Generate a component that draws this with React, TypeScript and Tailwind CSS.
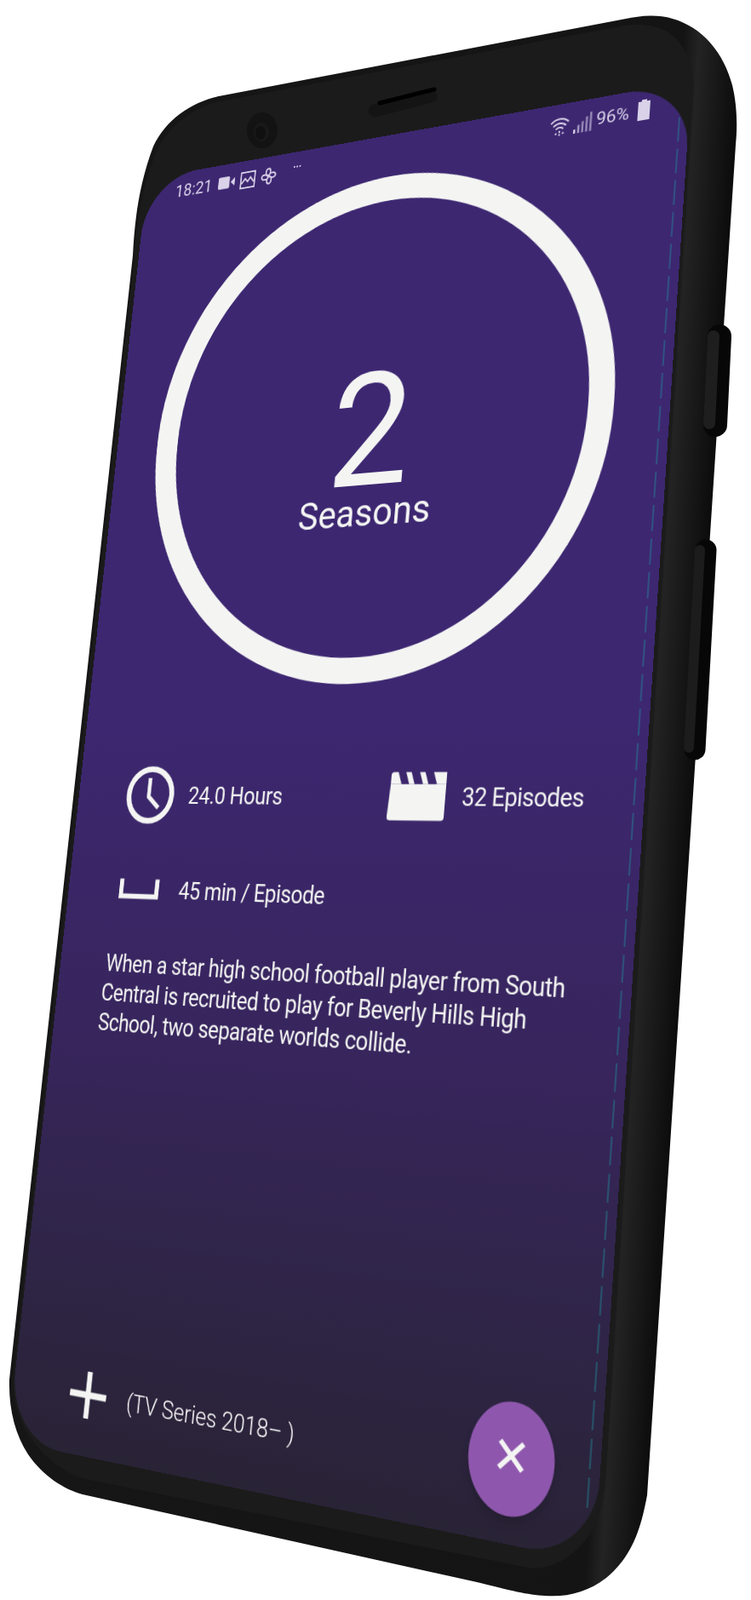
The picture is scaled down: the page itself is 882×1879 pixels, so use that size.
const W = 360;
const H = 760;

function quadMatrix(
  [x0, y0]: number[],
  [x1, y1]: number[],
  [x2, y2]: number[],
  [x3, y3]: number[],
) {
  const dx1 = x1 - x2;
  const dx2 = x3 - x2;
  const sx = x0 - x1 + x2 - x3;
  const dy1 = y1 - y2;
  const dy2 = y3 - y2;
  const sy = y0 - y1 + y2 - y3;
  const den = dx1 * dy2 - dx2 * dy1;
  const g = (sx * dy2 - dx2 * sy) / den;
  const h = (dx1 * sy - sx * dy1) / den;
  const a = x1 - x0 + g * x1;
  const b = x3 - x0 + h * x3;
  const d = y1 - y0 + g * y1;
  const e = y3 - y0 + h * y3;
  return `matrix3d(${[a / W, d / W, 0, g / W, b / H, e / H, 0, h / H, 0, 0, 1, 0, x0, y0, 0, 1].join(",")})`;
}

function PhoneBody() {
  return (
    <svg className="absolute inset-0" width="882" height="1879" viewBox="0 0 882 1879">
      <defs>
        <linearGradient id="side" gradientUnits="userSpaceOnUse" x1="85" y1="857" x2="822" y2="904">
          <stop offset="0" stopColor="#161616" />
          <stop offset="0.9" stopColor="#141414" />
          <stop offset="0.925" stopColor="#232323" />
          <stop offset="1" stopColor="#090909" />
        </linearGradient>
      </defs>
      <path
        d="M257 113L735 22C750 19 770 16 790 22C825 32 850 62 860 100C866 125 866 150 864 170L760 1756C752 1800 740 1830 712 1853C690 1870 665 1876 640 1874C620 1873 600 1868 560 1858L97 1755C75 1749 50 1733 33 1708C18 1685 10 1655 11 1620L156 300C158 260 163 217 180 172C195 140 225 120 257 113Z"
        fill="url(#side)"
      />
      <path
        d="M258 119L722 32C745 27 765 28 782 36C800 46 812 70 815 95L711 1740C708 1770 700 1795 685 1812C668 1830 650 1842 625 1842L100 1737C70 1728 45 1705 30 1680C20 1660 15 1640 15 1620L158 300C160 260 168 215 185 175C200 145 230 125 258 119Z"
        fill="#1b1b1b"
      />
      <line x1="845" y1="395" x2="840" y2="499" stroke="#070707" strokeWidth="28" strokeLinecap="round" />
      <line x1="838" y1="395" x2="833" y2="497" stroke="#1e1e1e" strokeWidth="14" strokeLinecap="round" />
      <line x1="829" y1="646" x2="816" y2="880" stroke="#070707" strokeWidth="25" strokeLinecap="round" />
      <line x1="822" y1="646" x2="809" y2="878" stroke="#1c1c1c" strokeWidth="12" strokeLinecap="round" />
      <line x1="440" y1="130" x2="506" y2="113" stroke="#141414" strokeWidth="15" strokeLinecap="round" />
      <line x1="446" y1="121" x2="510" y2="105" stroke="#000000" strokeWidth="5" strokeLinecap="round" />
      <ellipse cx="308" cy="153" rx="18" ry="21" fill="#131313" />
      <ellipse cx="307" cy="155" rx="9" ry="11" fill="#191919" />
      <ellipse cx="306" cy="156" rx="6" ry="8" fill="#101010" />
    </svg>
  );
}

function StatusLeft() {
  return (
    <div className="flex items-center gap-[4px] text-[#d9d2e9]">
      <span className="text-[11px] leading-none mr-[1px]">18:21</span>
      <svg width="12" height="8" viewBox="0 0 11 7" fill="currentColor">
        <rect width="7.5" height="7" rx="0.8" />
        <path d="M8.2 3.5L11 1v5z" />
      </svg>
      <svg width="11" height="11" viewBox="0 0 10 10" fill="none" stroke="currentColor" strokeWidth="0.9">
        <rect x="0.5" y="0.5" width="9" height="9" />
        <path d="M1 7L3.2 4.2L5 6L6.6 3.6L9 6.5" />
      </svg>
      <svg width="11" height="11" viewBox="0 0 10 10" fill="none" stroke="currentColor" strokeWidth="0.9">
        <path d="M5 5C2.6 4.8 2.6 .6 4.6 .6C6.4 .6 6.4 3.4 5 5ZM5 5C5.2 2.6 9.4 2.6 9.4 4.6C9.4 6.4 6.6 6.4 5 5ZM5 5C7.4 5.2 7.4 9.4 5.4 9.4C3.6 9.4 3.6 6.6 5 5ZM5 5C4.8 7.4 .6 7.4 .6 5.4C.6 3.6 3.4 3.6 5 5Z" />
      </svg>
      <span className="ml-[8px] mb-[5px] flex gap-[1px]">
        <span className="w-[1px] h-[1px] bg-current" />
        <span className="w-[1px] h-[1px] bg-current" />
        <span className="w-[1px] h-[1px] bg-current" />
      </span>
    </div>
  );
}

function StatusRight() {
  return (
    <div className="flex items-center gap-[2px] text-[#d9d2e9] translate-y-[1px]">
      <svg width="13" height="12" viewBox="0 0 10 10" fill="none" stroke="currentColor" strokeWidth="0.8">
        <path d="M0.5 3.4C3 0.8 7 0.8 9.5 3.4" />
        <path d="M1.8 5C3.6 3.2 6.4 3.2 8.2 5" />
        <path d="M3.1 6.5C4.2 5.5 5.8 5.5 6.9 6.5" />
        <path d="M3.2 8.2v1.6M5 7.4v2.4M6.8 8.2v1.6" strokeDasharray="1 0.6" />
      </svg>
      <svg width="12" height="12" viewBox="0 0 10 10" fill="currentColor">
        <rect x="0" y="8" width="1" height="2" />
        <rect x="2" y="6" width="1" height="4" opacity="0.7" />
        <rect x="4" y="4.5" width="1" height="5.5" opacity="0.6" />
        <rect x="6" y="2.5" width="1" height="7.5" opacity="0.6" />
        <rect x="8" y="0.5" width="1" height="9.5" opacity="0.6" />
      </svg>
      <span className="text-[10.5px] leading-none mr-[3px]">96%</span>
      <svg width="7" height="12" viewBox="0 0 7 12" fill="currentColor" className="-translate-y-[1px]">
        <path d="M2 0h3v1h2v11H0V1h2z" />
      </svg>
    </div>
  );
}

function ClockIcon() {
  return (
    <svg width="34" height="34" viewBox="0 0 34 34" fill="none" stroke="#f4f5f3">
      <circle cx="17" cy="17" r="15.2" strokeWidth="3.4" />
      <path d="M16 7V18L23.5 24.5" strokeWidth="2.6" />
    </svg>
  );
}

function ClapperIcon() {
  return (
    <svg width="35" height="28" viewBox="0 0 37 28" fill="#f4f5f3">
      <path d="M1 7V2a2 2 0 0 1 2-2h2.5l2.5 7zM10.5 0h3.5l2.5 7H13zM19.5 0H23l2.5 7H22zM28.5 0H37v7h-6z" />
      <path d="M1 7h36v19a2 2 0 0 1-2 2H2a2 2 0 0 1-2-2z" />
    </svg>
  );
}

function BracketIcon() {
  return (
    <svg width="28" height="12" viewBox="0 0 29 12" fill="#f4f5f3">
      <path d="M0 0h3v9h23V0h3v12H0z" />
    </svg>
  );
}

function Screen() {
  const transform = quadMatrix([173, 210], [812, 95], [698, 1835], [9, 1692]);
  return (
    <div
      className="absolute left-0 top-0 origin-top-left w-[360px] h-[760px] rounded-[38px] overflow-hidden flex flex-col bg-linear-to-b from-[#3d2771] from-45% via-[#37255c] via-70% to-[#292336] font-[family-name:Roboto,sans-serif] text-[#f4f5f3]"
      style={{ transform }}
    >
      <div className="h-6 shrink-0 px-[23px] flex items-center justify-between">
        <StatusLeft />
        <StatusRight />
      </div>

      <div className="ml-[30px] mt-[2px] w-[298px] h-[301px] shrink-0 rounded-full border-[15px] border-[#f4f5f3] flex flex-col items-center pt-[104px]">
        <span className="text-[94px] leading-[70px] font-[380]">2</span>
        <span className="text-[22.5px] leading-[26px] font-normal">Seasons</span>
      </div>

      <div className="mt-[46px] pl-[35px] grid grid-cols-[176px_1fr] items-center">
        <div className="flex items-center gap-[10px]">
          <ClockIcon />
          <span className="text-[13.5px] leading-5 tracking-[-0.2px]">24.0 Hours</span>
        </div>
        <div className="flex items-center gap-[10px]">
          <ClapperIcon />
          <span className="text-[13.5px] leading-5 tracking-[-0.25px]">32 Episodes</span>
        </div>
      </div>

      <div className="mt-[28px] pl-[37px] flex items-center gap-[14px]">
        <BracketIcon />
        <span className="text-[13.5px] leading-5 tracking-[-0.25px]">45 min / Episode</span>
      </div>

      <p className="mt-[25px] pl-[32px] text-[13.5px] leading-[17px] tracking-[-0.25px] whitespace-nowrap">
        <span className="ml-[1px]">When a star high school football player from South</span>
        <br />
        Central is recruited to play for Beverly Hills High
        <br />
        School, two separate worlds collide.
      </p>

      <div className="flex-1" />

      <div className="pl-[40px] pr-[24px] pb-[13px] flex items-end justify-between">
        <div className="flex items-center gap-[14px] mb-[7px]">
          <svg width="25" height="25" viewBox="0 0 25 25" stroke="#f4f5f3" strokeWidth="3.4">
            <path d="M12.5 0V25M0 12.5H25" />
          </svg>
          <span className="text-[13.3px] leading-5 font-light text-white">(TV Series 2018– )</span>
        </div>
        <div className="w-[47px] h-[54px] rounded-[50%] bg-[#8e57ad] shadow-md flex items-center justify-center">
          <svg width="17" height="17" viewBox="0 0 16 16" stroke="#f4f5f3" strokeWidth="2.4" className="mb-[3px]">
            <path d="M2 2L14 14M14 2L2 14" />
          </svg>
        </div>
      </div>

      <div className="absolute right-[5px] top-[20px] bottom-[21px] w-px bg-[repeating-linear-gradient(to_bottom,#1f8f9c_0_14px,transparent_14px_18px)] opacity-40" />
    </div>
  );
}

export default function App() {
  return (
    <div className="relative w-[882px] h-[1879px] overflow-hidden bg-white">
      <PhoneBody />
      <Screen />
    </div>
  );
}
